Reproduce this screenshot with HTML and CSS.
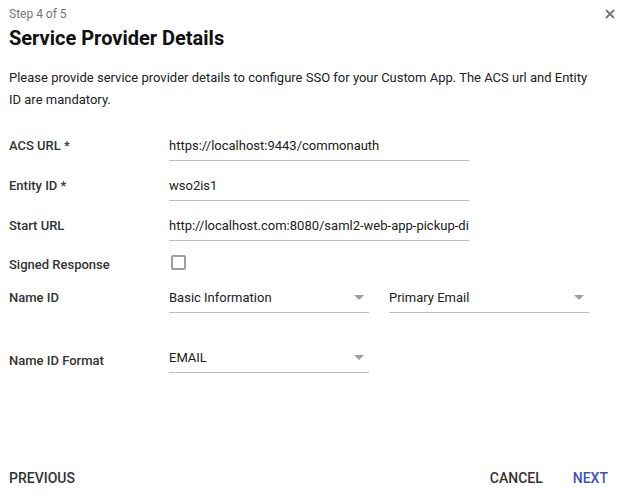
FILE: index.html
```html
<!DOCTYPE html>
<html lang="en">
<head>
    <meta charset="UTF-8">
    <title>Service Provider Details</title>
    <link rel="stylesheet" href="styles.css">
</head>
<body>
    <div class="dialog">
        <div class="header">
            <div class="step">Step 4 of 5</div>
            <h1>Service Provider Details</h1>
            <button class="close" aria-label="Close">
                <svg width="10" height="10" viewBox="0 0 10 10"><path d="M1 1L9 9M9 1L1 9" stroke="#757575" stroke-width="1.8"/></svg>
            </button>
        </div>
        <p class="intro">Please provide service provider details to configure SSO for your Custom App. The ACS url and Entity ID are mandatory.</p>

        <div class="form">
            <div class="row">
                <label>ACS URL *</label>
                <div class="field">https://localhost:9443/commonauth</div>
            </div>
            <div class="row">
                <label>Entity ID *</label>
                <div class="field">wso2is1</div>
            </div>
            <div class="row">
                <label>Start URL</label>
                <div class="field">http://localhost.com:8080/saml2-web-app-pickup-di</div>
            </div>
            <div class="row row-check">
                <label>Signed Response</label>
                <span class="checkbox"></span>
            </div>
            <div class="row row-select">
                <label>Name ID</label>
                <div class="field select"><span>Basic Information</span><i class="arrow"></i></div>
                <div class="field select second"><span>Primary Email</span><i class="arrow"></i></div>
            </div>
            <div class="row row-format">
                <label>Name ID Format</label>
                <div class="field select"><span>EMAIL</span><i class="arrow"></i></div>
            </div>
        </div>

        <div class="actions">
            <button class="btn">Previous</button>
            <div class="right">
                <button class="btn">Cancel</button>
                <button class="btn primary">Next</button>
            </div>
        </div>
    </div>
</body>
</html>
```

FILE: styles.css
```css
body {
    margin: 0;
    font-family: Roboto, "Liberation Sans", sans-serif;
    background-color: white;
    color: #212121;
}
.dialog {
    display: flex;
    flex-direction: column;
    height: 497px;
    box-sizing: border-box;
    padding: 0 10px 0 9px;
}
.header {
    position: relative;
    padding-top: 6px;
}
.step {
    font-size: 12px;
    color: #757575;
    line-height: 16px;
}
h1 {
    margin: 3px 0 0 0;
    font-size: 20px;
    font-weight: 700;
    line-height: 26px;
    color: #111;
}
.close {
    position: absolute;
    top: 9px;
    right: 0;
    border: none;
    background: none;
    padding: 0;
    width: 10px;
    height: 10px;
    cursor: pointer;
}
.close svg {
    display: block;
}
.intro {
    margin: 16px 0 0 0;
    font-size: 13px;
    line-height: 22px;
    color: #222;
    padding-right: 18px;
}
.form {
    display: flex;
    flex-direction: column;
    margin-top: 10px;
}
.row {
    display: flex;
    align-items: center;
    height: 31px;
    margin-top: 9px;
}
.row label {
    width: 160px;
    font-size: 13px;
    font-weight: 500;
    color: #333;
}
.field {
    width: 300px;
    height: 30px;
    border-bottom: 1px solid #bdbdbd;
    display: flex;
    align-items: center;
    font-size: 13px;
    color: #212121;
    white-space: nowrap;
    overflow: hidden;
}
.row-check {
    height: 28px;
}
.checkbox {
    width: 11px;
    height: 11px;
    border: 2px solid #9e9e9e;
    border-radius: 2px;
    margin: 0 0 4px 2px;
}
.row-select {
    margin-top: 4px;
}
.select {
    width: 200px;
    justify-content: space-between;
}
.select.second {
    margin-left: 20px;
}
.arrow {
    width: 0;
    height: 0;
    border-left: 5px solid transparent;
    border-right: 5px solid transparent;
    border-top: 5px solid #9e9e9e;
    margin-right: 5px;
}
.row-format {
    margin-top: 29px;
}
.row-format label {
    padding-top: 5px;
}
.actions {
    margin-top: auto;
    display: flex;
    justify-content: space-between;
    align-items: center;
    height: 38px;
}
.right {
    display: flex;
    gap: 30px;
    padding-right: 7px;
}
.btn {
    border: none;
    background: none;
    padding: 0;
    font-family: inherit;
    font-size: 14px;
    font-weight: 500;
    text-transform: uppercase;
    color: #333;
    cursor: pointer;
}
.btn.primary {
    color: #3f51b5;
}
```
